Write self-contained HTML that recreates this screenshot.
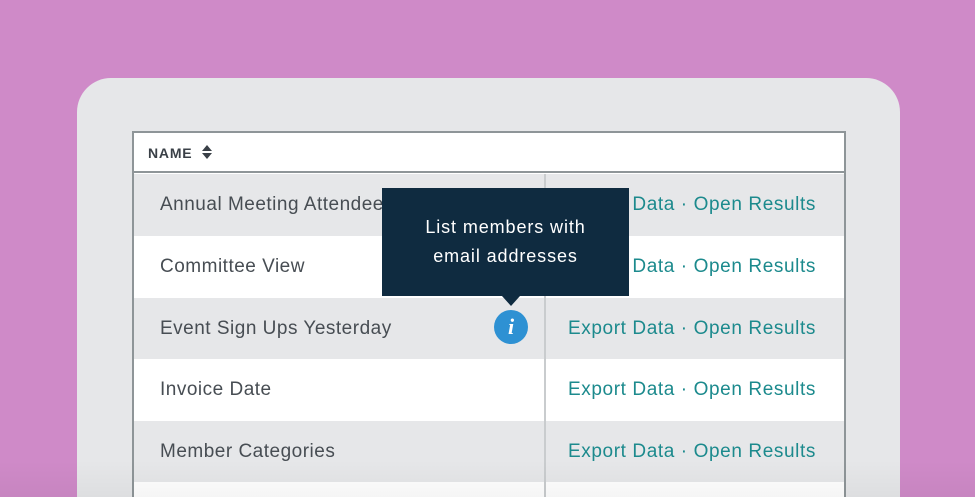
<!DOCTYPE html>
<html style="width:975px;height:497px;overflow:hidden"><head><style>
*{margin:0;padding:0;box-sizing:border-box}
body{width:975px;height:497px;background:#CF8AC8;position:relative;overflow:hidden;font-family:"Liberation Sans",sans-serif}
.dev{position:absolute;left:77px;top:78px;width:823px;height:419px;background:#E6E7E9;border-radius:34px 34px 0 0}
.tbl{position:absolute;left:132px;top:131px;width:714px;height:366px;border:2px solid #8E9598;border-bottom:none;background:#fff;overflow:hidden}
.hdr{position:absolute;left:0;top:0;width:710px;height:40px;background:#fff;border-bottom:2px solid #8E9598}
.hdr span{position:absolute;left:14px;top:11px;font-size:14px;font-weight:bold;color:#3a4047;letter-spacing:0.8px}
.row{position:absolute;left:0;width:710px;height:62px}
.g{background:#E6E7E9}.w{background:#fff}
.nm{position:absolute;left:26px;top:20px;font-size:19px;color:#474d53;letter-spacing:0.5px}
.lk{position:absolute;left:434px;top:20px;font-size:19px;color:#1C8A8D;letter-spacing:0.6px}
.div{position:absolute;left:410px;top:41px;width:2px;height:330px;background:#C9CCCE}
.tip{position:absolute;left:382px;top:188px;width:247px;height:108px;background:#0F2B40;color:#fff;font-size:18px;text-align:center;line-height:29px;padding-top:25px;letter-spacing:0.9px}
.arr{position:absolute;left:502px;top:296px;border-left:9px solid transparent;border-right:9px solid transparent;border-top:10px solid #0F2B40}
.info{position:absolute;left:494px;top:310px;width:34px;height:34px;border-radius:50%;background:#2E91D3;color:#fff;font-family:"Liberation Serif",serif;font-style:italic;font-weight:bold;font-size:22px;text-align:center;line-height:34px}
.fade{position:absolute;left:0;top:460px;width:975px;height:37px;background:linear-gradient(rgba(0,0,0,0),rgba(0,0,0,0.04))}
</style></head><body>
<div class="dev"></div>
<div class="tbl">
<div class="hdr"><span>NAME <svg width="12" height="16" viewBox="0 0 12 16" style="vertical-align:-2px;margin-left:4px"><path d="M6 1L11 7H1Z M6 15L11 9H1Z" fill="#3a4047"/></svg></span></div>
<div class="row g" style="top:41px"><span class="nm">Annual Meeting Attendees</span><span class="lk">Export Data · Open Results</span></div>
<div class="row w" style="top:103px"><span class="nm">Committee View</span><span class="lk">Export Data · Open Results</span></div>
<div class="row g" style="top:165px"><span class="nm">Event Sign Ups Yesterday</span><span class="lk">Export Data · Open Results</span></div>
<div class="row w" style="top:226px"><span class="nm">Invoice Date</span><span class="lk">Export Data · Open Results</span></div>
<div class="row g" style="top:288px"><span class="nm">Member Categories</span><span class="lk">Export Data · Open Results</span></div>
<div class="row w" style="top:349px"></div>
<div class="div"></div>
</div>
<div class="tip">List members with<br>email addresses</div>
<div class="arr"></div>
<div class="info">i</div>
<div class="fade"></div>
</body></html>
